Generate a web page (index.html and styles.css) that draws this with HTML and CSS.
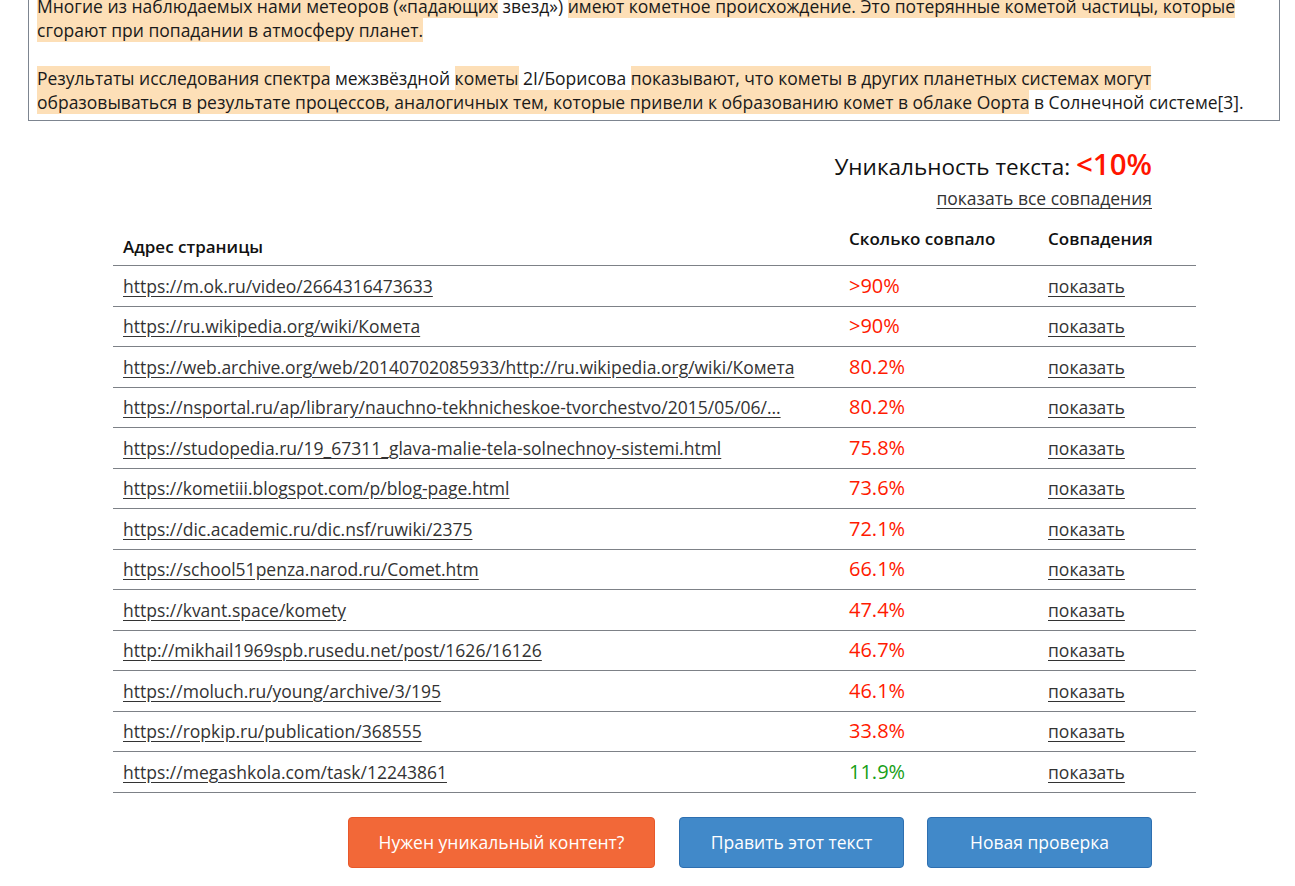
FILE: index.html
```html
<!DOCTYPE html>
<html lang="ru">
<head>
<meta charset="utf-8">
<title>Уникальность текста</title>
<link rel="stylesheet" href="styles.css">
</head>
<body>
<div class="page">
  <div class="textbox">
    <p><span class="hl">Многие из наблюдаемых нами метеоров («падающих</span> звезд») <span class="hl">имеют кометное происхождение. Это потерянные кометой частицы, которые</span><br><span class="hl">сгорают при попадании в атмосферу планет.</span></p>
    <p><span class="hl">Результаты исследования спектра</span> межзвёздной <span class="hl">кометы</span> 2I/Борисова <span class="hl">показывают, что кометы в других планетных системах могут</span><br><span class="hl">образовываться в результате процессов, аналогичных тем, которые привели к образованию комет в облаке Оорта</span> в Солнечной системе[3].</p>
  </div>

  <div class="result">
    <div class="uniq">Уникальность текста: <span class="uniq-val">&lt;10%</span></div>
    <div class="all-link"><a href="#">показать все совпадения</a></div>

    <div class="grid">
      <div class="th th-addr">Адрес страницы</div>
      <div class="th">Сколько совпало</div>
      <div class="th">Совпадения</div>

      <div class="td"><a href="#">https://m.ok.ru/video/2664316473633</a></div>
      <div class="td pct red">&gt;90%</div>
      <div class="td"><a href="#">показать</a></div>

      <div class="td"><a href="#">https://ru.wikipedia.org/wiki/Комета</a></div>
      <div class="td pct red">&gt;90%</div>
      <div class="td"><a href="#">показать</a></div>

      <div class="td"><a href="#">https://web.archive.org/web/20140702085933/http://ru.wikipedia.org/wiki/Комета</a></div>
      <div class="td pct red">80.2%</div>
      <div class="td"><a href="#">показать</a></div>

      <div class="td"><a href="#">https://nsportal.ru/ap/library/nauchno-tekhnicheskoe-tvorchestvo/2015/05/06/…</a></div>
      <div class="td pct red">80.2%</div>
      <div class="td"><a href="#">показать</a></div>

      <div class="td"><a href="#">https://studopedia.ru/19_67311_glava-malie-tela-solnechnoy-sistemi.html</a></div>
      <div class="td pct red">75.8%</div>
      <div class="td"><a href="#">показать</a></div>

      <div class="td"><a href="#">https://kometiii.blogspot.com/p/blog-page.html</a></div>
      <div class="td pct red">73.6%</div>
      <div class="td"><a href="#">показать</a></div>

      <div class="td"><a href="#">https://dic.academic.ru/dic.nsf/ruwiki/2375</a></div>
      <div class="td pct red">72.1%</div>
      <div class="td"><a href="#">показать</a></div>

      <div class="td"><a href="#">https://school51penza.narod.ru/Comet.htm</a></div>
      <div class="td pct red">66.1%</div>
      <div class="td"><a href="#">показать</a></div>

      <div class="td"><a href="#">https://kvant.space/komety</a></div>
      <div class="td pct red">47.4%</div>
      <div class="td"><a href="#">показать</a></div>

      <div class="td"><a href="#">http://mikhail1969spb.rusedu.net/post/1626/16126</a></div>
      <div class="td pct red">46.7%</div>
      <div class="td"><a href="#">показать</a></div>

      <div class="td"><a href="#">https://moluch.ru/young/archive/3/195</a></div>
      <div class="td pct red">46.1%</div>
      <div class="td"><a href="#">показать</a></div>

      <div class="td"><a href="#">https://ropkip.ru/publication/368555</a></div>
      <div class="td pct red">33.8%</div>
      <div class="td"><a href="#">показать</a></div>

      <div class="td"><a href="#">https://megashkola.com/task/12243861</a></div>
      <div class="td pct green">11.9%</div>
      <div class="td"><a href="#">показать</a></div>
    </div>

    <div class="buttons">
      <a href="#" class="btn btn-orange">Нужен уникальный контент?</a>
      <a href="#" class="btn btn-blue btn-edit">Править этот текст</a>
      <a href="#" class="btn btn-blue btn-new">Новая проверка</a>
    </div>
  </div>
</div>
</body>
</html>
```

FILE: styles.css
```css
html, body {
  margin: 0;
  padding: 0;
  background: #ffffff;
}

body {
  font-family: "Open Sans", "Noto Sans", sans-serif;
  color: #222222;
  overflow: hidden;
}

.page {
  padding-left: 28px;
  width: 1252px;
}

.textbox {
  margin-top: -20px;
  border: 1px solid #7d8590;
  padding: 13px 8px 6px 8px;
  font-size: 17.5px;
  line-height: 24px;
  color: #1a1a1a;
}

.textbox p {
  margin: 0 0 24px 0;
}

.textbox p:last-child {
  margin-bottom: 0;
}

.hl {
  background: #fddfb7;
}

.result {
  margin-left: 85px;
  width: 1083px;
}

.uniq {
  margin-top: 25px;
  padding-right: 44px;
  text-align: right;
  font-size: 22.5px;
  line-height: 36px;
  color: #111111;
}

.uniq-val {
  color: #ff1500;
  font-size: 29.5px;
  font-weight: 600;
}

.all-link {
  margin-top: 1px;
  padding-right: 44px;
  text-align: right;
  font-size: 17.5px;
  line-height: 24px;
}

a {
  color: #333333;
  text-decoration: underline;
  text-underline-offset: 3px;
}

.grid {
  margin-top: 12px;
  display: grid;
  grid-template-columns: 726px 199px 158px;
  grid-template-rows: 44px;
  grid-auto-rows: 40.5px;
  font-size: 17.5px;
}

.th, .td {
  box-sizing: border-box;
  padding-left: 10px;
  border-bottom: 1px solid #7d8187;
  white-space: nowrap;
}

.th {
  font-weight: 600;
  font-size: 17px;
  color: #111111;
  padding-top: 5px;
  line-height: 24px;
}

.th-addr {
  padding-top: 13px;
}

.td {
  display: flex;
  align-items: center;
  line-height: 24px;
}

.pct {
  font-size: 20px;
}

.red {
  color: #ff1a00;
}

.green {
  color: #18a018;
}

.buttons {
  margin-top: 24px;
  padding-right: 44px;
  display: flex;
  justify-content: flex-end;
  gap: 24px;
}

.btn {
  box-sizing: border-box;
  height: 51px;
  display: flex;
  align-items: center;
  justify-content: center;
  border-radius: 4px;
  color: #ffffff;
  text-decoration: none;
  font-size: 17.5px;
}

.btn-orange {
  width: 307px;
  background: #f26838;
  border: 1px solid #e8582a;
}

.btn-blue {
  width: 225px;
  background: #4189c9;
  border: 1px solid #2e6fb0;
}

.btn-new {
  margin-left: -1px;
}
```
